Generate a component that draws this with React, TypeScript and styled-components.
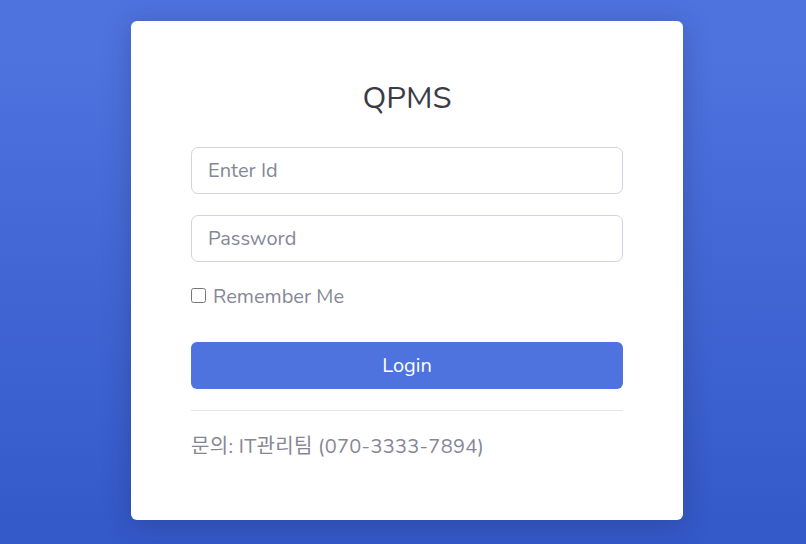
import React from "react";
import styled, { createGlobalStyle } from "styled-components";

const Global = createGlobalStyle`
  html, body { margin: 0; padding: 0; }
  body {
    font-family: "Nunito", Lato, "Noto Sans CJK KR", sans-serif;
    background: linear-gradient(180deg, #4e73df 10%, #3358c8 100%);
    min-height: 544px;
  }
  * { box-sizing: border-box; }
`;

const Page = styled.div`
  min-height: 544px;
  display: flex;
  justify-content: center;
  align-items: flex-start;
  padding: 21px 0 0 8px;
`;

const Card = styled.div`
  width: 552px;
  height: 499px;
  background: #fff;
  border-radius: 6px;
  box-shadow: 0 4px 28px 0 rgba(30, 32, 60, 0.28);
  padding: 57px 60px 0;
  display: flex;
  flex-direction: column;
`;

const Title = styled.h1`
  margin: 0 0 29px;
  text-align: center;
  font-size: 31px;
  font-weight: 400;
  color: #3a3b45;
  line-height: 40px;
`;

const Input = styled.input`
  width: 100%;
  height: 47px;
  border: 1px solid #d1d3e2;
  border-radius: 7px;
  padding: 0 16px;
  font-family: inherit;
  font-size: 20px;
  color: #6e707e;
  margin-bottom: 21px;
  outline: none;
  &::placeholder { color: #858796; }
`;

const CheckRow = styled.label`
  display: flex;
  align-items: center;
  gap: 7px;
  font-size: 20px;
  color: #858796;
  margin-top: 1px;
  height: 24px;
`;

const Box = styled.input`
  width: 15px;
  height: 15px;
  margin: 0 0 2px 0;
`;

const Button = styled.button`
  margin-top: 34px;
  width: 100%;
  height: 47px;
  border: none;
  border-radius: 6px;
  background: #4e73df;
  color: #fff;
  font-family: inherit;
  font-size: 20px;
`;

const Rule = styled.hr`
  margin: 21px 0 0;
  border: 0;
  border-top: 1px solid #e3e6f0;
`;

const Contact = styled.div`
  margin-top: 23px;
  font-size: 20px;
  letter-spacing: 0.3px;
  color: #858796;
  line-height: 26px;
`;

export default function App() {
  return (
    <>
      <Global />
      <Page>
        <Card>
          <Title>QPMS</Title>
          <Input placeholder="Enter Id" />
          <Input type="password" placeholder="Password" />
          <CheckRow>
            <Box type="checkbox" />
            Remember Me
          </CheckRow>
          <Button>Login</Button>
          <Rule />
          <Contact>문의: IT관리팀 (070-3333-7894)</Contact>
        </Card>
      </Page>
    </>
  );
}
